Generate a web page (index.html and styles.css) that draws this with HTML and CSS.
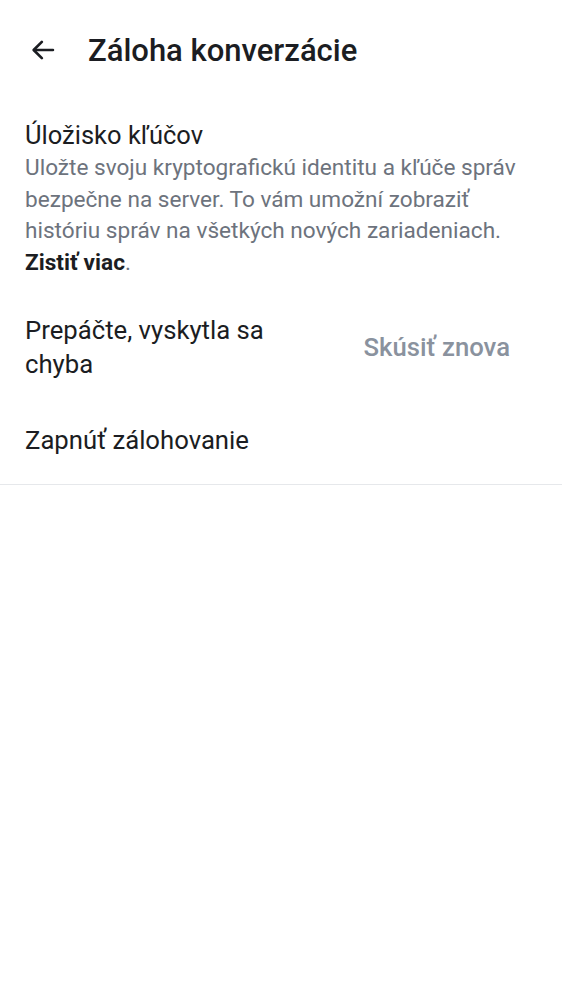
FILE: index.html
```html
<!DOCTYPE html>
<html lang="sk">
<head>
<meta charset="utf-8">
<link rel="stylesheet" href="styles.css">
</head>
<body>
<header class="topbar">
  <button class="back" aria-label="Späť">
    <svg width="28" height="28" viewBox="0 0 24 24" fill="none" stroke="#1b1d22" stroke-width="2.3" stroke-linecap="round" stroke-linejoin="round"><path d="M20.5 12H4.5"/><path d="M11 5l-7 7 7 7"/></svg>
  </button>
  <h1 class="title">Záloha konverzácie</h1>
</header>
<main class="content">
  <section class="block">
    <h2 class="block-title">Úložisko kľúčov</h2>
    <p class="block-desc">Uložte svoju kryptografickú identitu a kľúče správ bezpečne na server. To vám umožní zobraziť históriu správ na všetkých nových zariadeniach. <strong>Zistiť viac</strong>.</p>
  </section>
  <div class="error-row">
    <span class="error-text">Prepáčte, vyskytla sa chyba</span>
    <button class="retry">Skúsiť znova</button>
  </div>
  <div class="action-row">Zapnúť zálohovanie</div>
</main>
</body>
</html>
```
FILE: styles.css
```css
* { box-sizing: border-box; }
body {
  margin: 0;
  background: #fff;
  font-family: Roboto, "Noto Sans", sans-serif;
  color: #1b1d22;
}
.topbar {
  display: flex;
  align-items: center;
  height: 100px;
  padding-left: 28px;
}
.back {
  border: 0;
  background: none;
  padding: 0;
  width: 30px;
  height: 30px;
  display: flex;
  align-items: center;
  justify-content: center;
  margin-right: 30px;
}
.title {
  margin: 0;
  font-size: 31px;
  font-weight: 500;
  letter-spacing: 0;
}
.content {
  border-bottom: 1px solid #e6e8eb;
}
.block {
  padding: 18px 25px 0;
}
.block-title {
  margin: 0;
  font-size: 25.5px;
  font-weight: 400;
  line-height: 34px;
}
.block-desc {
  margin: 0;
  font-size: 22.6px;
  line-height: 31.7px;
  color: #6d737d;
}
.block-desc strong {
  color: #1b1d22;
  font-weight: 700;
}
.error-row {
  display: flex;
  align-items: center;
  justify-content: space-between;
  padding: 34px 52px 0 25px;
}
.error-text {
  width: 300px;
  font-size: 25.7px;
  line-height: 34px;
}
.retry {
  border: 0;
  background: none;
  padding: 0;
  font-family: inherit;
  font-size: 25.7px;
  font-weight: 500;
  color: #8a929e;
}
.action-row {
  padding: 42px 25px 27px;
  font-size: 25.7px;
  line-height: 34px;
}
```
